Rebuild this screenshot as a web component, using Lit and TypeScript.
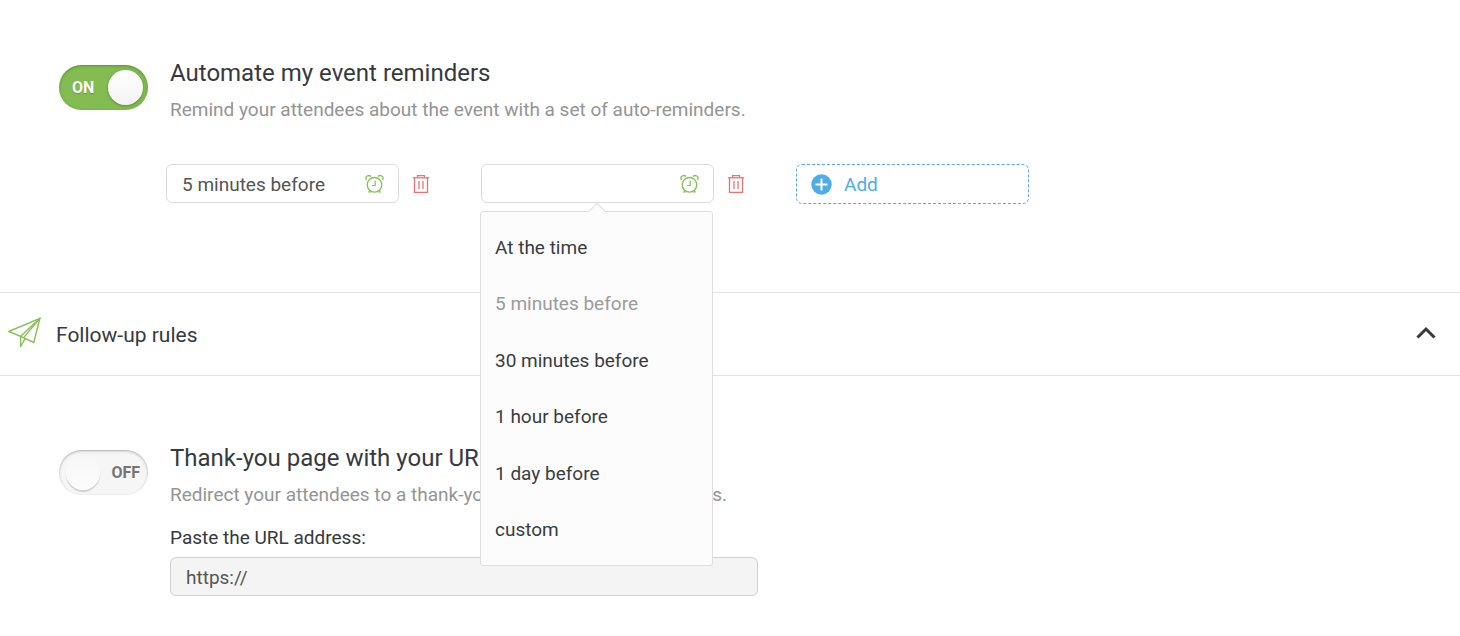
import { LitElement, html, css, svg, nothing } from "lit";
import { customElement, property, state } from "lit/decorators.js";

const clockIcon = svg`
  <svg class="clock" viewBox="0 0 20 20" width="20" height="20" fill="none" stroke="#85c155" aria-hidden="true">
    <circle cx="9.500" cy="10.800" r="7.300" stroke-width="1.300" />
    <path d="M10.200 6.500V11.500H7" stroke-width="1.200" />
    <path d="M1.500 6C.600 4.400 .800 2.800 2.200 2C3.600 1.300 5.200 1.500 5.900 2.600" stroke-width="1.300" />
    <path d="M17.500 6C18.400 4.400 18.200 2.800 16.800 2C15.400 1.300 13.800 1.500 13.100 2.600" stroke-width="1.300" />
    <path d="M4.600 16.300L3.800 18H6M14.400 16.300L15.200 18H13" stroke-width="1.100" />
  </svg>`;

const trashIcon = svg`
  <svg viewBox="0 0 18 20" width="18" height="20" fill="none" stroke="#ec7272" aria-hidden="true">
    <path d="M.800 3.800H17.200" stroke-width="1.300" />
    <path d="M5.500 3.500V1.700H12.500V3.500" stroke-width="1.300" />
    <path d="M2.500 4V18.400H15.500V4" stroke-width="1.300" />
    <path d="M7 7V15M11 7V15" stroke-width="1.300" />
  </svg>`;

@customElement("toggle-switch")
export class ToggleSwitch extends LitElement {
  @property({ type: Boolean }) on = false;
  @property() label = "";

  static styles = css`
    :host {
      display: block;
      flex: none;
    }
    .switch {
      position: relative;
      display: flex;
      align-items: center;
      width: 89px;
      height: 45px;
      cursor: pointer;
    }
    .box {
      appearance: none;
      position: absolute;
      inset: 0;
      margin: 0;
      border-radius: 23px;
      background: #f6f6f6;
      box-shadow: inset 0 1px 3px rgba(0, 0, 0, 0.24), inset 0 1px 1px rgba(0, 0, 0, 0.08);
      cursor: pointer;
    }
    .box:checked {
      background: #83bd51;
      box-shadow: inset 0 1px 3px rgba(0, 60, 0, 0.35);
    }
    .box::after {
      content: "";
      position: absolute;
      top: 5px;
      left: 7px;
      width: 34px;
      height: 35px;
      border-radius: 50%;
      background: linear-gradient(#f7f7f7, #fcfcfc);
      box-shadow: 0 2px 1px rgba(0, 0, 0, 0.16);
    }
    .box:checked::after {
      left: auto;
      right: 5px;
      width: 35px;
      background: linear-gradient(#ffffff, #f3f3f3);
      box-shadow: 0 1px 3px rgba(0, 0, 0, 0.3);
    }
    .caption {
      position: relative;
      width: 100%;
      box-sizing: border-box;
      padding: 0 8px 0 13px;
      font: 700 16px/24px Roboto, sans-serif;
      color: #757575;
      text-align: right;
      pointer-events: none;
    }
    .caption.on {
      color: #fff;
      text-align: left;
      text-shadow: 0 1px 1px rgba(0, 0, 0, 0.2);
    }
  `;

  render() {
    return html`<label class="switch">
      <input
        class="box"
        type="checkbox"
        role="switch"
        aria-label=${this.label}
        .checked=${this.on}
        @change=${(e: Event) => (this.on = (e.target as HTMLInputElement).checked)}
      />
      <span class="caption ${this.on ? "on" : ""}">${this.on ? "ON" : "OFF"}</span>
    </label>`;
  }
}

@customElement("reminder-field")
export class ReminderField extends LitElement {
  @property() value = "";
  @property({ type: Boolean }) open = false;

  private options = [
    "At the time",
    "5 minutes before",
    "30 minutes before",
    "1 hour before",
    "1 day before",
    "custom",
  ];

  static styles = css`
    :host {
      display: flex;
      align-items: center;
      gap: 13px;
      font-family: Roboto, sans-serif;
    }
    .picker {
      position: relative;
      flex: none;
      width: 233px;
    }
    .value {
      display: block;
      box-sizing: border-box;
      width: 100%;
      height: 39px;
      padding: 2px 48px 0 15px;
      border: 1px solid #dcdcdc;
      border-radius: 6px;
      background: #fff;
      font: 19px/25px Roboto, sans-serif;
      color: #555;
      outline: none;
      cursor: pointer;
    }
    .clock {
      position: absolute;
      top: 10px;
      right: 14px;
      pointer-events: none;
    }
    .remove {
      display: flex;
      padding: 0;
      border: 0;
      background: none;
      cursor: pointer;
    }
    .menu {
      position: absolute;
      z-index: 2;
      top: 47px;
      left: -1px;
      box-sizing: border-box;
      display: grid;
      grid-template-rows: repeat(6, 1fr);
      width: 233px;
      height: 355px;
      padding: 7px 0;
      border: 1px solid #dedede;
      border-radius: 3px;
      background: #fcfcfc;
    }
    .menu::before {
      content: "";
      position: absolute;
      top: -7px;
      left: 110px;
      width: 11px;
      height: 11px;
      border: solid #dedede;
      border-width: 1px 0 0 1px;
      background: #fcfcfc;
      transform: rotate(45deg);
    }
    .option {
      padding: 0 14px;
      border: 0;
      background: none;
      font: 19px/25px Roboto, sans-serif;
      color: #3a3c40;
      text-align: left;
      cursor: pointer;
    }
    .option:disabled {
      color: #9b9b9b;
      cursor: default;
    }
  `;

  private choose(option: string) {
    this.value = option;
    this.open = false;
  }

  render() {
    return html`
      <div class="picker">
        <input
          class="value"
          type="text"
          readonly
          aria-label="Reminder time"
          .value=${this.value}
          @click=${() => (this.open = !this.open)}
        />
        ${clockIcon}
        ${this.open
          ? html`<div class="menu" role="listbox">
              ${this.options.map(
                (o) => html`<button
                  class="option"
                  role="option"
                  ?disabled=${o === "5 minutes before"}
                  @click=${() => this.choose(o)}
                >${o}</button>`,
              )}
            </div>`
          : nothing}
      </div>
      <button class="remove" aria-label="Remove reminder">${trashIcon}</button>
    `;
  }
}

@customElement("app-root")
export class AppRoot extends LitElement {
  @state() private reminders = [
    { value: "5 minutes before", open: false },
    { value: "", open: true },
  ];

  static styles = css`
    :host {
      display: block;
      font-family: Roboto, sans-serif;
      color: #36393e;
    }
    .setting {
      display: flex;
      align-items: flex-start;
      gap: 22px;
      padding-left: 59px;
    }
    .reminders {
      padding-top: 57px;
    }
    .thanks {
      padding-top: 66px;
    }
    .switch-cell {
      padding-top: 8px;
    }
    .title {
      margin: 0;
      font-size: 24px;
      font-weight: 400;
      line-height: 32px;
    }
    .note {
      margin: 8px 0 0;
      font-size: 19px;
      line-height: 25px;
      color: #949494;
    }
    .fields {
      display: grid;
      grid-template-columns: repeat(3, 315px);
      align-items: start;
      padding: 42px 0 88px 166px;
    }
    .add {
      display: flex;
      align-items: center;
      gap: 12px;
      width: 233px;
      height: 40px;
      padding: 0 14px;
      border: 1px dashed #4dade6;
      border-radius: 6px;
      background: none;
      font: 19px/25px Roboto, sans-serif;
      color: #4dade6;
      cursor: pointer;
    }
    .section {
      display: flex;
      align-items: center;
      gap: 14px;
      padding: 24px 24px 24px 8px;
      border: solid #e3e3e3;
      border-width: 1px 0;
    }
    .section-title {
      flex: 1;
      margin: 0;
      padding-top: 2px;
      font-size: 21px;
      font-weight: 400;
      line-height: 32px;
    }
    .collapse {
      display: flex;
      padding: 0;
      border: 0;
      background: none;
      cursor: pointer;
    }
    .url-label {
      display: block;
      margin-top: 18px;
      font-size: 19px;
      line-height: 25px;
    }
    .url {
      display: block;
      box-sizing: border-box;
      width: 588px;
      height: 39px;
      margin-top: 7px;
      padding: 2px 15px 0;
      border: 1px solid #d0d0d0;
      border-radius: 6px;
      background: #f4f4f4;
      font: 19px/25px Roboto, sans-serif;
      color: #555;
    }
  `;

  render() {
    return html`
      <section class="setting reminders">
        <div class="switch-cell">
          <toggle-switch on label="Automate my event reminders"></toggle-switch>
        </div>
        <div>
          <h3 class="title">Automate my event reminders</h3>
          <p class="note">Remind your attendees about the event with a set of auto-reminders.</p>
        </div>
      </section>
      <div class="fields">
        ${this.reminders.map(
          (r) => html`<reminder-field .value=${r.value} .open=${r.open}></reminder-field>`,
        )}
        <button
          class="add"
          @click=${() => (this.reminders = [...this.reminders, { value: "", open: false }])}
        >
          <svg viewBox="0 0 21 21" width="21" height="21" aria-hidden="true">
            <circle cx="10.500" cy="10.500" r="10.200" fill="#4dade6" />
            <path d="M10.500 4.500V16.500M4.500 10.500H16.500" stroke="#fff" stroke-width="2" />
          </svg>
          Add
        </button>
      </div>
      <header class="section">
        <svg viewBox="0 0 34 34" width="34" height="34" fill="none" stroke="#85c155" stroke-width="1.400" stroke-linejoin="round" aria-hidden="true">
          <path d="M33 .800L.800 14.500L12.600 19.300L25.800 25.500L31.800 1.500" />
          <path d="M31.500 1.800L12.600 19.300V29.500L17.200 21.500" />
          <path d="M31.500 1.800L15.600 20.600" />
        </svg>
        <h2 class="section-title">Follow-up rules</h2>
        <button class="collapse" aria-label="Collapse follow-up rules">
          <svg viewBox="0 0 20 16" width="20" height="16" fill="none" stroke="#36393e" stroke-width="3" aria-hidden="true">
            <path d="M1.500 11.500L10 3L18.500 11.500" />
          </svg>
        </button>
      </header>
      <section class="setting thanks">
        <div class="switch-cell">
          <toggle-switch label="Thank-you page with your URL"></toggle-switch>
        </div>
        <div>
          <h3 class="title">Thank-you page with your URL</h3>
          <p class="note">Redirect your attendees to a thank-you page after your event ends.</p>
          <label class="url-label" for="url">Paste the URL address:</label>
          <input class="url" id="url" type="text" value="https://" />
        </div>
      </section>
    `;
  }
}
